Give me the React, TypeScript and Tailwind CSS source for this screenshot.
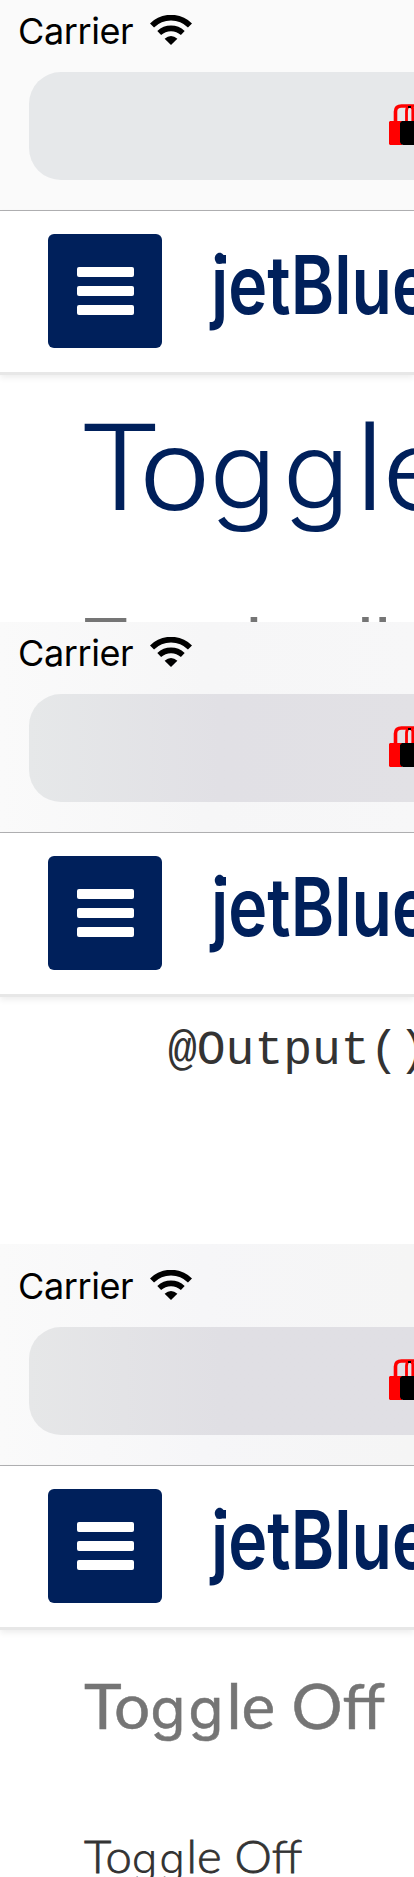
import React from "react";

function WifiIcon() {
  return (
    <svg className="mt-[15px] ml-[17px] h-[30px] w-[42px] shrink-0" viewBox="0 0 42 30" fill="none">
      <path d="M2 10.500A27 27 0 0 1 40 10.500" stroke="#000" strokeWidth="5.8" />
      <path d="M9.200 18A17.500 17.500 0 0 1 32.800 18" stroke="#000" strokeWidth="5.6" />
      <path d="M21 30l-6.400-6.200q6.400-5.400 12.800 0z" fill="#000" />
    </svg>
  );
}

function Locks() {
  return (
    <svg className="h-[42px] w-[25px]" viewBox="0 0 25 42">
      <path d="M6.500 18V7.500q0-5.500 6-5.500H25" fill="none" stroke="#f00" strokeWidth="3.600" />
      <path d="M17.500 18V7q0-4 3-5M23.800 18V5l-2-3" fill="none" stroke="#f00" strokeWidth="2.800" />
      <path d="M19 2h3v2h-3z" fill="#000" />
      <path d="M1 17h12v24H1l-1-1V18z" fill="#f00" />
      <path d="M13 17h12v24H14l-2-1-1-2V19z" fill="#000" />
    </svg>
  );
}

function Logo() {
  return (
    <svg className="h-[90px] w-[206px] shrink-0" viewBox="0 0 206 90" fill="#00205b">
      <text x="3" y="69" textLength="220" lengthAdjust="spacingAndGlyphs" fontFamily="Inter, sans-serif" fontWeight="600" fontSize="81">
        jetBlue
      </text>
      <rect x="8.500" y="10" width="9.500" height="8.500" />
    </svg>
  );
}

function ToggleWord({ g }: { g: string }) {
  return (
    <>
      To<span className={"font-['Inter'] text-[0.9em] leading-none " + g}>gg</span>le
    </>
  );
}

type FrameProps = { bar: string; field: string; top?: string; children: React.ReactNode; height: string };

function Frame({ bar, field, top = "", height, children }: FrameProps) {
  return (
    <section className={"w-full shrink-0 overflow-hidden bg-white " + height}>
      <div className={"border-b border-[#b0b0b2] " + bar + " " + top}>
        <div className="flex h-[72px] items-start">
          <span className="ml-[18px] w-[115px] pt-[9px] font-['Inter'] text-[36px] leading-[44px] tracking-[-0.4px] text-black">Carrier</span>
          <WifiIcon />
        </div>
        <div className={"ml-[29px] flex h-[108px] items-start justify-end rounded-l-[32px] pt-[32px] " + field}>
          <Locks />
        </div>
        <div className="h-[30px]" />
      </div>
      <header className="flex h-[164px] items-start border-b-[3px] border-[#e7e7e7] bg-white pt-[23px] shadow-[0_3px_6px_rgba(0,0,0,0.07)]">
        <button className="ml-12 flex h-[114px] w-[114px] shrink-0 flex-col items-center justify-center gap-[9px] rounded-[6px] bg-[#00205b]">
          <span className="h-[10px] w-[57px] rounded-[2px] bg-white" />
          <span className="h-[10px] w-[57px] rounded-[2px] bg-white" />
          <span className="h-[10px] w-[57px] rounded-[2px] bg-white" />
        </button>
        <div className="ml-[46px] pt-[11px]"><Logo /></div>
      </header>
      {children}
    </section>
  );
}

export default function App() {
  return (
    <main className="flex h-[1877px] w-full flex-col overflow-hidden bg-white">
      <Frame height="h-[622px]" bar="bg-[#fafafa]" field="bg-[#e6e8ea]">
        <h1 className="ml-[84px] h-[224px] pt-[18px] font-['Lato'] text-[118px] leading-[142px] font-light whitespace-nowrap text-[#00205b] [-webkit-text-stroke:2.2px_#00205b]">
          <span className="inline-block origin-left scale-x-[1.05]"><ToggleWord g="tracking-[0.055em] [-webkit-text-stroke:0px]" /></span>
        </h1>
        <p className="ml-[84px] font-['Lato'] text-[70px] leading-[84px] whitespace-nowrap text-[#757575]">
          <span className="inline-block origin-left scale-x-[1.05]"><ToggleWord g="tracking-[0.03em]" /> all</span>
        </p>
      </Frame>
      <Frame height="h-[622px]" bar="bg-linear-to-r from-[#fafafa] via-[#f6f6f7] to-[#f7f7f8]" field="bg-linear-to-r from-[#e6e8e9] via-[#e1e0e5] to-[#e2e1e5]">
        <p className="ml-[168px] pt-[24px] font-['Liberation_Mono'] text-[48px] leading-[60px] whitespace-nowrap text-[#333]">@Output()</p>
      </Frame>
      <Frame height="h-[633px]" top="pt-[11px]" bar="bg-linear-to-r from-[#fafafa] via-[#f6f6f8] to-[#f5f5f5]" field="bg-linear-to-r from-[#e6e7e8] via-[#e0dfe4] to-[#e0dfe4]">
        <h2 className="ml-[84px] h-[135px] pt-[38px] font-['Lato'] text-[62px] leading-[74px] font-normal whitespace-nowrap text-[#757575] [-webkit-text-stroke:0.5px_#757575]">
          <span className="inline-block origin-left scale-x-[1.03]"><ToggleWord g="tracking-[0.05em]" /> Off</span>
        </h2>
        <p className="ml-[84px] pt-[64px] font-['Lato'] text-[45px] leading-[54px] font-light whitespace-nowrap text-[#333] [-webkit-text-stroke:0.8px_#333]">
          <span className="inline-block origin-left scale-x-[1.05]"><ToggleWord g="tracking-[0.04em] [-webkit-text-stroke:0px]" /> Off</span>
        </p>
      </Frame>
    </main>
  );
}
